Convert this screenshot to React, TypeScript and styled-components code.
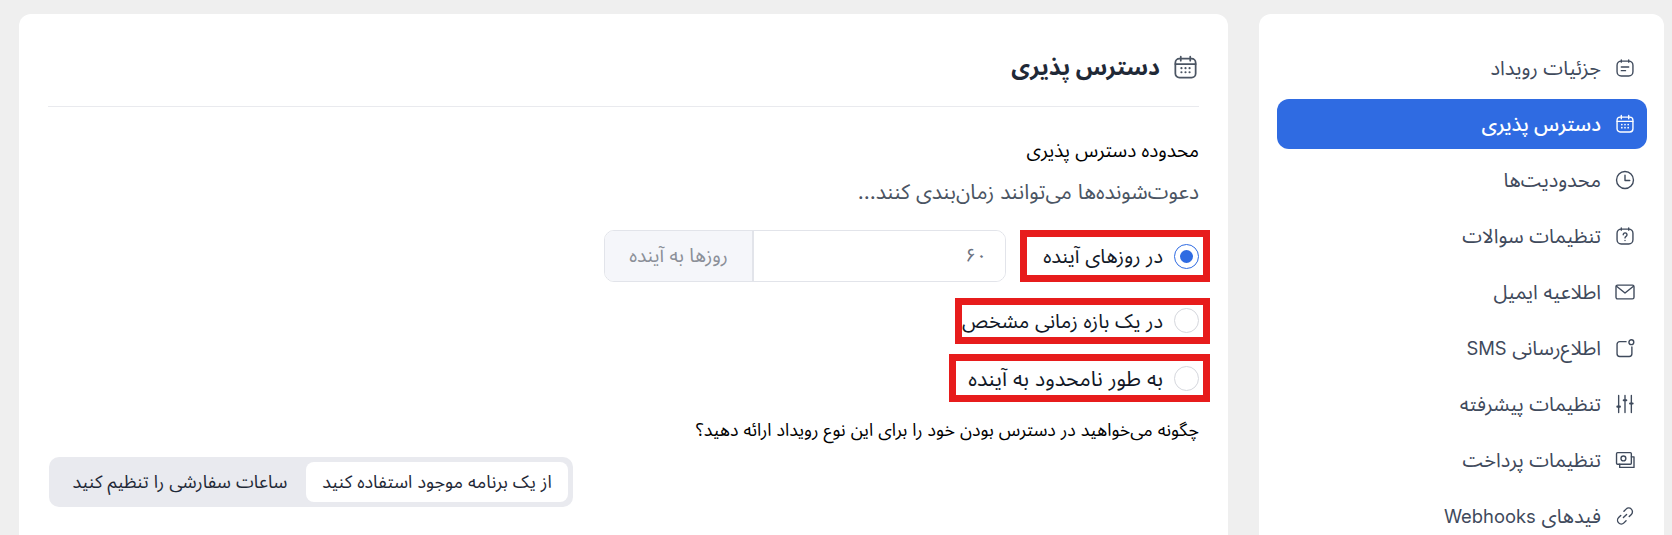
import React from "react";
import styled, { createGlobalStyle } from "styled-components";

const Global = createGlobalStyle`
  html, body { margin: 0; padding: 0; background: #efefef; height: 535px; overflow: hidden; }
  body { font-family: Inter, "Noto Sans Arabic", "DejaVu Sans", sans-serif; }
  * { box-sizing: border-box; }
`;

const Page = styled.div`
  direction: rtl;
  width: 1672px;
  height: 535px;
  overflow: hidden;
  display: flex;
  gap: 31px;
  padding: 14px 8px 0 0;
`;

const Sidebar = styled.nav`
  width: 405px;
  height: 560px;
  flex: none;
  background: #fff;
  border-radius: 12px;
  padding: 29px 17px 0 18px;
  display: flex;
  flex-direction: column;
  gap: 6px;
`;

const NavItem = styled.a<{ $active?: boolean }>`
  height: 50px;
  flex: none;
  display: flex;
  align-items: center;
  gap: 15px;
  padding: 0 13px;
  border-radius: 12px;
  font-size: 20px;
  line-height: 26px;
  font-weight: ${(p) => (p.$active ? 500 : 400)};
  color: ${(p) => (p.$active ? "#fff" : "#3f4a5c")};
  background: ${(p) => (p.$active ? "#2f6be2" : "transparent")};
`;

const Latin = styled.span`
  font-size: 18.4px;
`;

const IconSvg = styled.svg<{ $size?: number }>`
  width: ${(p) => p.$size ?? 18}px;
  height: ${(p) => p.$size ?? 18}px;
  flex: none;
  fill: none;
  overflow: visible;
  stroke: currentColor;
  stroke-width: 1.3;
  stroke-linecap: round;
  stroke-linejoin: round;
`;

const Main = styled.main`
  width: 1209px;
  height: 560px;
  flex: none;
  background: #fff;
  border-radius: 12px;
  padding: 0 29px;
`;

const Header = styled.header`
  height: 93px;
  display: flex;
  align-items: center;
  gap: 14px;
  border-bottom: 1px solid #e9eaee;
  color: #1f2937;
  padding: 14px 2px 0 0;
`;

const HeaderIcon = styled.span`
  display: flex;
  color: #4b5563;
`;

const Title = styled.h1`
  margin: 0;
  font-size: 23px;
  line-height: 30px;
  font-weight: 700;
  color: #1f2937;
`;

const SectionLabel = styled.div`
  margin-top: 31px;
  height: 26px;
  line-height: 26px;
  font-size: 19px;
  font-weight: 400;
  color: #000;
`;

const Hint = styled.div`
  margin-top: 15px;
  height: 26px;
  line-height: 26px;
  font-size: 21px;
  color: #4b5563;
`;

const Options = styled.div`
  margin-top: 25px;
  display: flex;
  flex-direction: column;
`;

const OptionRow = styled.div<{ $h: number }>`
  height: ${(p) => p.$h}px;
  display: flex;
  align-items: center;
  gap: 15px;
`;

const RadioLabel = styled.label<{ $w?: number; $fs?: number }>`
  position: relative;
  display: flex;
  align-items: center;
  gap: 11px;
  ${(p) => (p.$w ? `width: ${p.$w}px;` : "")}
  font-size: ${(p) => p.$fs ?? 20}px;
  line-height: 26px;
  color: #111827;
  white-space: nowrap;
`;

const Radio = styled.span<{ $on?: boolean }>`
  width: 25px;
  height: 25px;
  flex: none;
  border-radius: 50%;
  border: 1px solid ${(p) => (p.$on ? "#2f6be2" : "#d5d7dd")};
  display: flex;
  align-items: center;
  justify-content: center;
  background: #fff;
  &::after {
    content: "";
    display: ${(p) => (p.$on ? "block" : "none")};
    width: 13px;
    height: 13px;
    border-radius: 50%;
    background: #2f6be2;
  }
`;

const RedBox = styled.span<{ $w: number; $h: number }>`
  position: absolute;
  top: 50%;
  right: -11px;
  width: ${(p) => p.$w}px;
  height: ${(p) => p.$h}px;
  transform: translateY(-50%);
  border: 7px solid #e71c1c;
  pointer-events: none;
`;

const InputGroup = styled.div`
  width: 402px;
  height: 52px;
  display: flex;
  border: 1px solid #e2e4ea;
  border-radius: 10px;
  overflow: hidden;
`;

const InputValue = styled.div`
  flex: 1;
  display: flex;
  align-items: center;
  padding: 0 18px;
  font-size: 19px;
  color: #6b7280;
  background: #fff;
`;

const InputAddon = styled.div`
  width: 149px;
  display: flex;
  align-items: center;
  justify-content: center;
  border-right: 2px solid #e2e4ea;
  background: #f5f6fa;
  color: #8b8f98;
  font-size: 19.2px;
`;

const Question = styled.div`
  margin-top: 21px;
  height: 24px;
  line-height: 24px;
  font-size: 17.8px;
  font-weight: 400;
  color: #000;
`;

const Toggle = styled.div`
  margin-top: 15px;
  margin-right: auto;
  margin-left: 1px;
  width: 524px;
  height: 50px;
  background: #e9eaef;
  border-radius: 10px;
  padding: 5px;
  display: flex;
`;

const ToggleBtn = styled.button<{ $on?: boolean }>`
  border: 0;
  direction: rtl;
  font: inherit;
  font-size: ${(p) => (p.$on ? 18 : 18)}px;
  line-height: 24px;
  color: #1f2937;
  flex: ${(p) => (p.$on ? "0 0 262px" : "1")};
  background: ${(p) => (p.$on ? "#fff" : "transparent")};
  border-radius: 8px;
  padding: 0;
  white-space: nowrap;
`;

const Cal = () => (
  <>
    <rect x="2.5" y="3.5" width="15" height="14" rx="3" />
    <path d="M2.5 7.5h15M6.5 2v3M13.5 2v3" />
    <path d="M7 10.500h.01M10 10.500h.01M13 10.500h.01M7 13.500h.01M10 13.500h.01M13 13.500h.01" strokeWidth="1.6" />
  </>
);

const icons: Record<string, React.ReactNode> = {
  details: (
    <>
      <rect x="2.5" y="3.5" width="15" height="14" rx="4" />
      <path d="M6.500 2.500v2M13.500 2.500v2M6.500 9h7M6.500 12.500h4" />
    </>
  ),
  cal: <Cal />,
  clock: (
    <>
      <circle cx="10" cy="10" r="8" />
      <path d="M10 5.500V10.500H14.500" />
    </>
  ),
  q: (
    <>
      <rect x="2.5" y="3.5" width="15" height="14" rx="4" />
      <path d="M6.500 2.500v2M13.500 2.500v2" />
      <path d="M8.300 8.800a1.800 1.800 0 1 1 2.700 1.600c-.6.4-1 .7-1 1.400M10 14.300h.01" />
    </>
  ),
  mail: (
    <>
      <rect x="1.5" y="3.5" width="17" height="13" rx="1.500" />
      <path d="M2 4.500l8 6.500 8-6.500" />
    </>
  ),
  sms: (
    <>
      <path d="M11 4H5a2.500 2.500 0 0 0-2.500 2.500v9A2.500 2.500 0 0 0 5 18h9a2.500 2.500 0 0 0 2.500-2.500V9" />
      <circle cx="16" cy="4.500" r="2.300" />
    </>
  ),
  sliders: (
    <>
      <path d="M4 2v16M10 2v16M16 2v16" />
      <path d="M2.800 12.500h2.400M8.800 6.500h2.400M14.800 9.500h2.400" strokeWidth="2" />
    </>
  ),
  pay: (
    <>
      <rect x="2" y="3" width="14" height="11" rx="1" />
      <path d="M16 7h2.500v10H5v-3" />
      <circle cx="8.500" cy="8.500" r="2.300" />
    </>
  ),
  link: (
    <>
      <path d="M8.500 11.500l3-3" />
      <path d="M9 5.500l2-2a3.500 3.500 0 0 1 5 5l-2 2" />
      <path d="M11 14.500l-2 2a3.500 3.500 0 0 1-5-5l2-2" />
    </>
  ),
};

const Icon = ({ name, size }: { name: string; size?: number }) => (
  <IconSvg viewBox="1.5 1.5 17 17" $size={size}>
    {icons[name]}
  </IconSvg>
);

const nav: [string, React.ReactNode][] = [
  ["details", "جزئیات رویداد"],
  ["cal", "دسترس پذیری"],
  ["clock", "محدودیت‌ها"],
  ["q", "تنظیمات سوالات"],
  ["mail", "اطلاعیه ایمیل"],
  ["sms", <>اطلاع‌رسانی <Latin>SMS</Latin></>],
  ["sliders", "تنظیمات پیشرفته"],
  ["pay", "تنظیمات پرداخت"],
  ["link", <>فیدهای <Latin>Webhooks</Latin></>],
];

export default function App() {
  return (
    <>
      <Global />
      <Page>
        <Sidebar>
          {nav.map(([icon, label], i) => (
            <NavItem key={icon} $active={i === 1}>
              <Icon name={icon} />
              <span>{label}</span>
            </NavItem>
          ))}
        </Sidebar>
        <Main>
          <Header>
            <HeaderIcon>
              <Icon name="cal" size={23} />
            </HeaderIcon>
            <Title>دسترس پذیری</Title>
          </Header>
          <SectionLabel>محدوده دسترس پذیری</SectionLabel>
          <Hint>دعوت‌شونده‌ها می‌توانند زمان‌بندی کنند...</Hint>
          <Options>
            <OptionRow $h={52}>
              <RadioLabel $w={178}>
                <Radio $on />
                در روزهای آینده
                <RedBox $w={190} $h={52} />
              </RadioLabel>
              <InputGroup>
                <InputValue>۶۰</InputValue>
                <InputAddon>روزها به آینده</InputAddon>
              </InputGroup>
            </OptionRow>
            <OptionRow $h={77}>
              <RadioLabel>
                <Radio />
                در یک بازه زمانی مشخص
                <RedBox $w={255} $h={46} />
              </RadioLabel>
            </OptionRow>
            <OptionRow $h={38}>
              <RadioLabel $fs={21.3}>
                <Radio />
                به طور نامحدود به آینده
                <RedBox $w={261} $h={48} />
              </RadioLabel>
            </OptionRow>
          </Options>
          <Question>چگونه می‌خواهید در دسترس بودن خود را برای این نوع رویداد ارائه دهید؟</Question>
          <Toggle>
            <ToggleBtn $on>از یک برنامه موجود استفاده کنید</ToggleBtn>
            <ToggleBtn>ساعات سفارشی را تنظیم کنید</ToggleBtn>
          </Toggle>
        </Main>
      </Page>
    </>
  );
}
